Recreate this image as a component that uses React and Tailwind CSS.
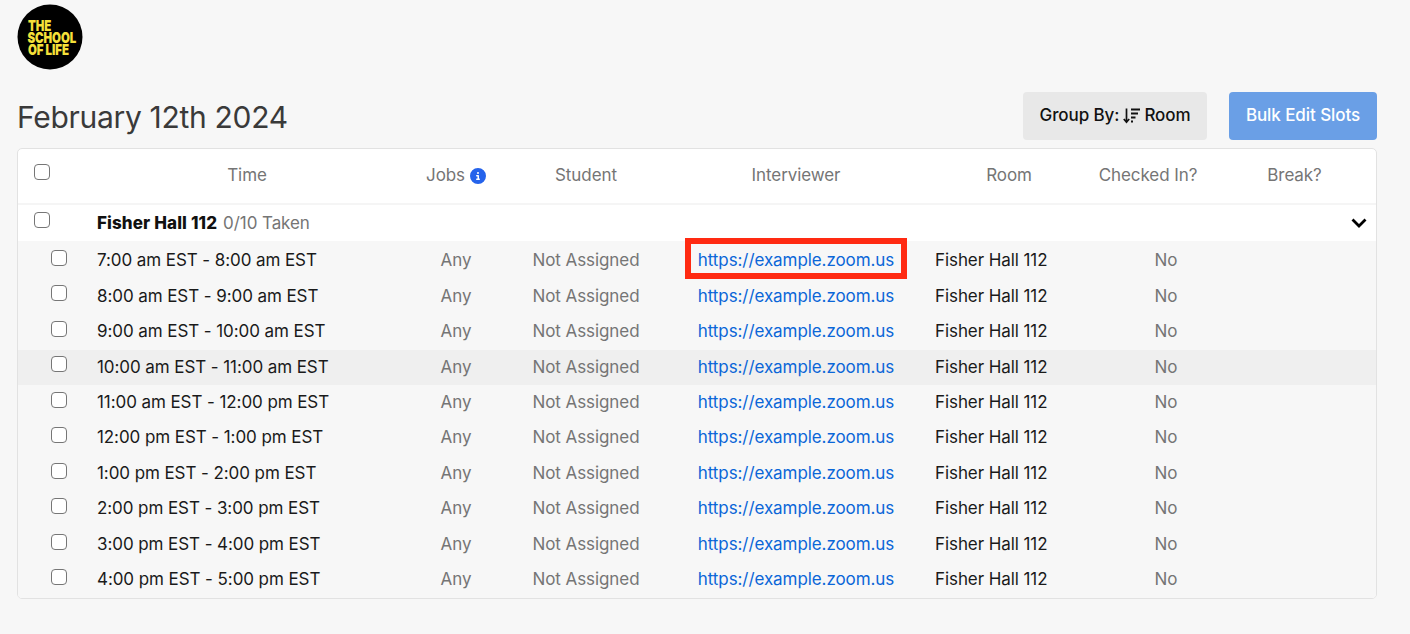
import React from "react";
import { FaCircleInfo } from "react-icons/fa6";

const times = [
  "7:00 am EST - 8:00 am EST",
  "8:00 am EST - 9:00 am EST",
  "9:00 am EST - 10:00 am EST",
  "10:00 am EST - 11:00 am EST",
  "11:00 am EST - 12:00 pm EST",
  "12:00 pm EST - 1:00 pm EST",
  "1:00 pm EST - 2:00 pm EST",
  "2:00 pm EST - 3:00 pm EST",
  "3:00 pm EST - 4:00 pm EST",
  "4:00 pm EST - 5:00 pm EST",
];

const columns = "grid grid-cols-[79px_300px_118px_142px_278px_148px_130px_1fr]";

const Check = () => (
  <input
    type="checkbox"
    className="appearance-none block w-[16px] h-[16px] bg-white border border-[#767676] rounded-[4px]"
  />
);

const Logo = () => (
  <svg width="66" height="66" viewBox="0 0 66 66" className="block">
    <circle cx="33" cy="33" r="32.5" fill="#000" />
    <g
      transform="translate(10.5 0) scale(.765 1)"
      fill="#f5e03a"
      fontFamily="Inter, sans-serif"
      fontWeight="900"
      fontSize="15"
    >
      <text x="0.5" y="27">THE</text>
      <text x="0" y="39.5">SCHOOL</text>
      <text x="0.5" y="51">OF LIFE</text>
    </g>
  </svg>
);

const SortIcon = () => (
  <svg width="17" height="16" viewBox="0 0 17 16" className="block" fill="none" stroke="currentColor">
    <path d="M3.5 0.5V14M0.8 11l2.7 3.2L6.2 11" strokeWidth="1.7" />
    <path d="M8 1.5h9M8 5.5h7M8 9.5h4.5M8 13.5h2" strokeWidth="1.9" />
  </svg>
);

const App = () => {
  return (
    <div className="min-h-[634px] bg-[#f7f7f7] font-['Inter',sans-serif] pl-[17px] pr-[33px] pt-[4px] pb-[36px] text-[17px] tracking-[-0.08px]">
      <Logo />
      <div className="flex items-center justify-between mt-[22px]">
        <h1 className="text-[30px] leading-[44px] pt-[2px] tracking-[-0.3px] text-[#3a3a3a]">February 12th 2024</h1>
        <div className="flex gap-[22px]">
          <button className="h-[48px] w-[184px] rounded-[4px] bg-[#e8e8e8] text-[#111] font-medium flex items-center justify-center gap-[4px]">
            Group By: <SortIcon /> Room
          </button>
          <button className="h-[48px] w-[148px] rounded-[4px] bg-[#6a9fe6] text-white font-medium">
            Bulk Edit Slots
          </button>
        </div>
      </div>
      <div className="mt-[8px] bg-white border border-[#e2e2e2] rounded-[5px] overflow-hidden">
        <div className={`${columns} h-[56px] items-center text-center text-[#757575] border-b-2 border-[#f5f5f5]`}>
          <div className="pl-[16px] pb-[8px]"><Check /></div>
          <div>Time</div>
          <div className="flex items-center justify-center gap-[5px]">
            Jobs <FaCircleInfo className="text-[#2563eb] text-[16px]" />
          </div>
          <div>Student</div>
          <div>Interviewer</div>
          <div>Room</div>
          <div>Checked In?</div>
          <div>Break?</div>
        </div>
        <div className="h-[36px] flex items-center">
          <div className="w-[79px] pl-[16px] pb-[6px]"><Check /></div>
          <div className="mt-[2px] font-extrabold text-[#111] tracking-[0.12px]">Fisher Hall 112</div>
          <div className="mt-[2px] ml-[6px] text-[#757575]">0/10 Taken</div>
          <svg width="16" height="11" viewBox="0 0 16 11" fill="none" stroke="#000" strokeWidth="2.8" className="ml-auto mr-[9px]">
            <path d="M1.5 1.5L8 8l6.5-6.5" />
          </svg>
        </div>
        <div className="bg-[#f7f7f7] pt-[2.3px]">
          {times.map((time, i) => (
            <div
              key={time}
              className={`${columns} h-[35.45px] items-center text-center text-[#757575] ${i === 3 ? "bg-[#efefef]" : ""}`}
            >
              <div className="pl-[33px] pb-[6px]"><Check /></div>
              <div className="text-left text-[#1a1a1a]">{time}</div>
              <div>Any</div>
              <div>Not Assigned</div>
              <div>
                <span className="relative inline-block text-[#0b66d8]">
                  https://example.zoom.us
                  {i === 0 && (
                    <span className="absolute -left-[13px] -right-[13px] -top-[10px] -bottom-[5px] border-[6px] border-[#ff2a12]" />
                  )}
                </span>
              </div>
              <div className="text-left text-[#1a1a1a]">Fisher Hall 112</div>
              <div className="pl-[36px]">No</div>
              <div />
            </div>
          ))}
        </div>
      </div>
    </div>
  );
};

export default App;
